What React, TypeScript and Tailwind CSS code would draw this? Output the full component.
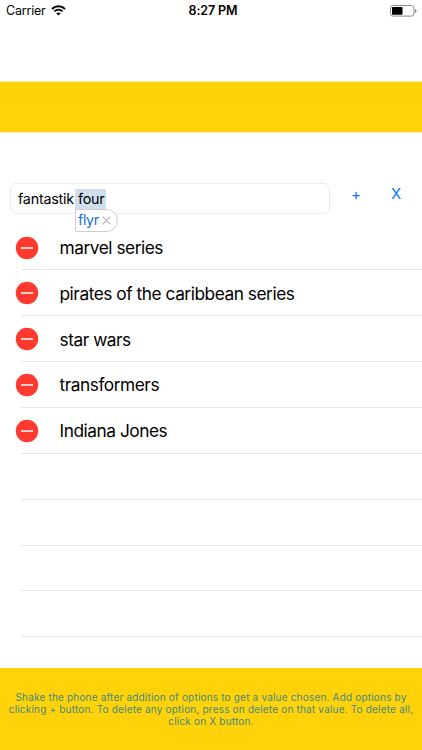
import { useState } from 'react';

const initialOptions = [
  'marvel series',
  'pirates of the caribbean series',
  'star wars',
  'transformers',
  'Indiana Jones',
];

const VISIBLE_ROWS = 9;

function WifiIcon() {
  return (
    <svg className="ml-[5px] h-[11px] w-[15px]" viewBox="0 0 15 11" fill="none" aria-hidden="true">
      <path d="M1 3.9C4.7 .4 10.3 .4 14 3.9" stroke="#000" strokeWidth="2" />
      <path d="M3.4 6.4C5.8 4.2 9.2 4.2 11.6 6.4" stroke="#000" strokeWidth="1.9" />
      <path d="M7.5 10.6 5.2 8.3C6.5 7.2 8.5 7.2 9.8 8.3Z" fill="#000" />
    </svg>
  );
}

function BatteryIcon() {
  return (
    <svg className="h-[12px] w-[27px]" viewBox="0 0 27 12" fill="none" aria-hidden="true">
      <rect x=".5" y=".5" width="23.4" height="10.6" rx="2.4" stroke="#8c8c8c" />
      <rect x="2" y="2" width="10.5" height="7.7" rx=".8" fill="#000" />
      <path d="M25 4v4c.9-.3 1.5-1.1 1.5-2S25.9 4.3 25 4Z" fill="#8c8c8c" />
    </svg>
  );
}

function DeleteIcon() {
  return (
    <svg className="h-[24px] w-[24px]" viewBox="0 0 24 24" aria-hidden="true">
      <circle cx="12" cy="12" r="11.2" fill="#ff3b30" />
      <path d="M6 12h12" stroke="#fff" strokeWidth="1.5" />
    </svg>
  );
}

function StatusBar() {
  return (
    <div className="grid h-[21px] grid-cols-3 items-center pl-[6px] pr-[5px]">
      <div className="flex items-center">
        <span className="pt-[2px] text-[12.5px] leading-none tracking-[-0.2px]">Carrier</span>
        <WifiIcon />
      </div>
      <span className="pl-[3px] pt-[2px] text-center text-[12.5px] font-semibold leading-none tracking-[-0.1px]">
        8:27 PM
      </span>
      <div className="flex justify-end">
        <BatteryIcon />
      </div>
    </div>
  );
}

function App() {
  const [options, setOptions] = useState(initialOptions);
  const rows = Array.from({ length: VISIBLE_ROWS }, (_, i) => options[i]);

  const removeOption = (index: number) => setOptions(options.filter((_, i) => i !== index));

  return (
    <div className="flex h-[750px] w-[422px] flex-col overflow-hidden bg-white font-['Inter','Liberation_Sans',sans-serif] text-black">
      <StatusBar />
      <div className="mt-[61px] h-[50px] shrink-0 bg-[#ffd20a] shadow-[0_0_0_1px_#fff0ad]" />

      <div className="mt-[51px] flex h-[31px] shrink-0 items-start pl-[10px]">
        <div className="flex h-[31px] w-[320px] items-center rounded-[6px] border border-[#ececec] pl-[7px] text-[14.3px] leading-none">
          <span className="w-[57px] whitespace-nowrap pt-px tracking-[-0.22px]">fantastik</span>
          <div className="relative flex h-[20px] w-[31px] items-center bg-[#d0dfee] pl-[3px] pt-px tracking-[-0.2px]">
            four
            <div className="absolute left-0 top-[20px] flex h-[23px] w-[43px] items-center rounded-r-[12px] border border-[#cfcfcf] bg-white pl-[2px] text-[#1b6fd6]">
              <span className="tracking-[-0.4px]">flyr</span>
              <svg className="ml-[3px] h-[9px] w-[9px]" viewBox="0 0 9 9" aria-hidden="true">
                <path d="M.7.7l7.6 7.6M8.3.7.7 8.3" stroke="#b4b4b4" strokeWidth="1.1" />
              </svg>
            </div>
          </div>
        </div>
        <button type="button" className="ml-[16px] h-[22px] w-[20px] pt-px text-[15px] leading-[22px] text-[#0b7bf5]">
          +
        </button>
        <button
          type="button"
          className="ml-[20px] h-[22px] w-[20px] text-[15px] leading-[22px] text-[#0b7bf5]"
          onClick={() => setOptions([])}
        >
          X
        </button>
      </div>

      <ul className="mt-[10.6px] flex-1">
        {rows.map((option, i) => (
          <li key={i} className="flex h-[45.85px] items-center">
            <div className="flex w-[21px] shrink-0 self-stretch">
              {option && (
                <button
                  type="button"
                  className="relative ml-[15px] shrink-0 self-center"
                  aria-label="Delete"
                  onClick={() => removeOption(i)}
                >
                  <DeleteIcon />
                </button>
              )}
            </div>
            <div className="flex flex-1 items-center self-stretch border-b border-[#e6e6e8] pl-[38.5px]">
              {option && (
                <span className="whitespace-nowrap pt-px text-[17.3px] leading-none tracking-[-0.46px]">
                  {option}
                </span>
              )}
            </div>
          </li>
        ))}
      </ul>

      <footer className="h-[82px] shrink-0 bg-[#ffd20a] pt-[23px] text-center text-[10px] leading-[12px] tracking-[0.19px] text-[#3f8a80]">
        <p className="whitespace-nowrap">Shake the phone after addition of options to get a value chosen. Add options by</p>
        <p className="whitespace-nowrap">clicking + button. To delete any option, press on delete on that value. To delete all,</p>
        <p className="whitespace-nowrap">click on X button.</p>
      </footer>
    </div>
  );
}

export default App;
